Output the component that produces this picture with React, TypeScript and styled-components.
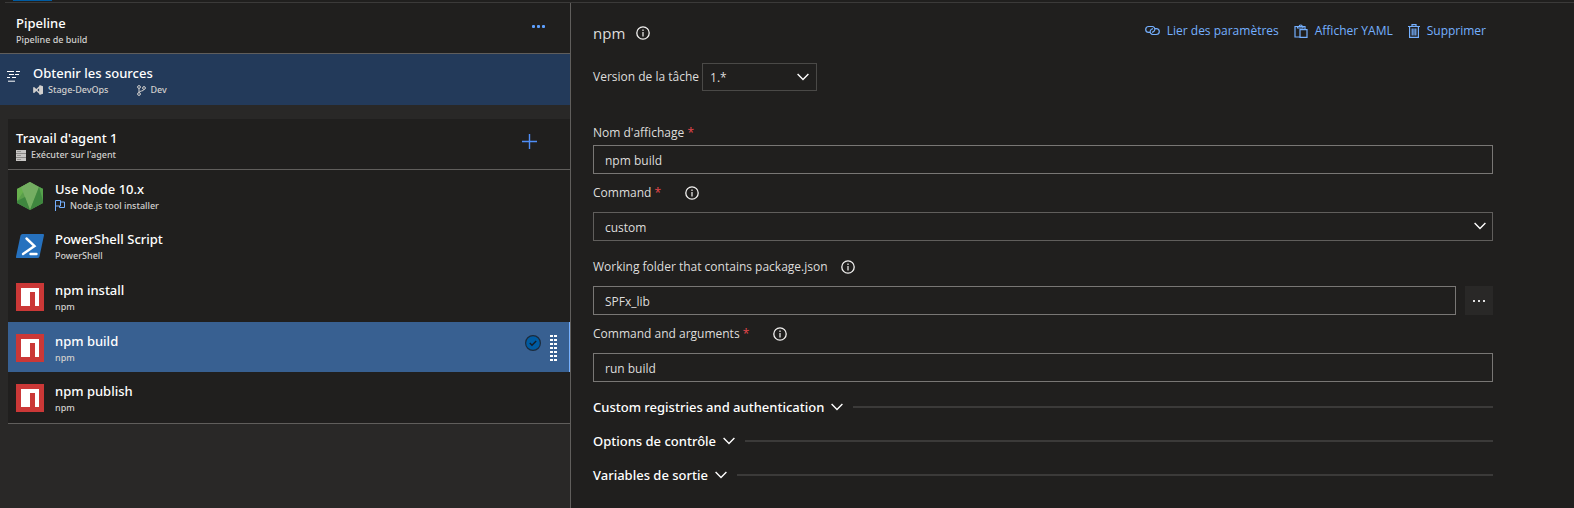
import React from 'react';
import styled, { createGlobalStyle, css } from 'styled-components';

const GlobalStyle = createGlobalStyle`
  *, *::before, *::after { box-sizing: border-box; }
  body {
    margin: 0;
    background: #201f1e;
    color: #dedddc;
    font-family: "Segoe UI", "Open Sans", "Noto Sans", sans-serif;
    font-size: 12px;
    line-height: 20px;
  }
  button, input, select { font: inherit; color: inherit; }
  button { background: none; border: 0; padding: 0; text-align: left; cursor: pointer; }
  svg { display: block; flex: none; }
`;

const Page = styled.div`
  display: flex;
  flex-direction: column;
  min-height: 100vh;
`;

const TabStrip = styled.div`
  height: 3px;
  margin-left: 5px;
  padding-left: 8px;
  border-bottom: 1px solid #3b3a39;
`;

const ActiveTab = styled.div`
  width: 39px;
  height: 1px;
  background: #005ba1;
`;

const Columns = styled.div`
  flex: 1;
  display: grid;
  grid-template-columns: minmax(0, 571fr) minmax(0, 1003fr);
`;

const Sidebar = styled.aside`
  background: #292827;
  border-right: 1px solid #605e5c;
`;

const Title = styled.span`
  display: block;
  font-family: "Segoe UI", "Noto Sans", sans-serif;
  font-size: 13px;
  font-weight: 500;
  line-height: 18px;
  color: #fff;
`;

const Subtitle = styled.span`
  display: flex;
  align-items: center;
  gap: 5px;
  font-family: "Segoe UI", "Noto Sans", sans-serif;
  font-size: 9px;
  font-weight: 500;
  line-height: 16px;
  color: #d2d0ce;
`;

const PipelineHeader = styled.header`
  display: flex;
  justify-content: space-between;
  height: 51px;
  padding: 11px 25px 0 16px;
  background: #201f1e;
  border-bottom: 1px solid #605e5c;
`;

const IconButton = styled.button`
  display: flex;
  align-items: center;
  justify-content: center;
  width: 14px;
  height: 24px;
  color: #5ea0ff;
`;

const SourcesRow = styled.button`
  display: flex;
  gap: 13px;
  width: 100%;
  height: 51px;
  padding: 10px 0 0 7px;
  background: #233a5a;
`;

const SourcesIcon = styled.span`
  padding-top: 7px;
`;

const SourceDetails = styled.span`
  display: flex;
  gap: 28px;
`;

const JobCard = styled.section`
  margin: 14px 0 0 8px;
  background: #201f1e;
  border-bottom: 1px solid #605e5c;
`;

const JobHeader = styled.div`
  display: flex;
  justify-content: space-between;
  height: 51px;
  padding: 10px 34px 0 8px;
  border-bottom: 1px solid #605e5c;
`;

const TaskList = styled.ul`
  display: grid;
  grid-auto-rows: 1fr;
  min-height: 253px;
  margin: 0;
  padding: 0;
  list-style: none;
`;

const TaskRow = styled.button<{ $selected?: boolean }>`
  display: flex;
  align-items: center;
  width: 100%;
  height: 100%;
  padding: 1px 12px 0 8px;
  border-right: 1px solid transparent;
  ${({ $selected }) =>
    $selected &&
    css`
      background: #386091;
      border-right-color: #75b0ff;
    `}
`;

const TaskText = styled.span`
  flex: 1;
  margin-left: 11px;
  padding-top: 2px;
`;

const TaskMarks = styled.span`
  display: flex;
  align-items: flex-start;
  gap: 9px;
`;

const Details = styled.main`
  padding: 0 81px 14px 22px;
`;

const DetailsHeader = styled.header`
  display: flex;
  align-items: center;
  justify-content: space-between;
  height: 60px;
`;

const TaskName = styled.h1`
  display: flex;
  align-items: center;
  gap: 11px;
  margin: 0;
  font-size: 15px;
  font-weight: 400;
`;

const Toolbar = styled.div`
  display: flex;
  gap: 15px;
  padding: 0 7px 5px 0;
`;

const ToolButton = styled.button`
  display: flex;
  align-items: center;
  gap: 7px;
  color: #75b0ff;
`;

const VersionRow = styled.div`
  display: flex;
  align-items: center;
  gap: 3px;
  margin-bottom: 32px;
`;

const SelectBox = styled.div<{ $small?: boolean }>`
  position: relative;
  width: ${({ $small }) => ($small ? '115px' : '100%')};
`;

const Select = styled.select<{ $small?: boolean }>`
  display: block;
  appearance: none;
  width: 100%;
  height: ${({ $small }) => ($small ? '28px' : '29px')};
  padding: 2px 32px 0 ${({ $small }) => ($small ? '7px' : '11px')};
  background: transparent;
  border: 1px solid ${({ $small }) => ($small ? '#4a4947' : '#605e5c')};
  border-radius: 0;
`;

const SelectArrow = styled.span<{ $small?: boolean }>`
  position: absolute;
  top: 10px;
  right: ${({ $small }) => ($small ? '8px' : '7px')};
  pointer-events: none;
`;

const Field = styled.div<{ $gap: number }>`
  margin-bottom: ${({ $gap }) => $gap}px;
`;

const LabelRow = styled.div<{ $tight?: boolean; $space?: number }>`
  display: flex;
  align-items: center;
  gap: ${({ $space }) => $space ?? 24}px;
  margin-bottom: ${({ $tight }) => ($tight ? '2px' : '9px')};
`;

const Required = styled.span`
  color: #e8484d;
`;

const TextInput = styled.input`
  display: block;
  width: 100%;
  min-width: 0;
  height: 29px;
  padding: 1px 11px 0;
  background: transparent;
  border: 1px solid #797775;
  border-radius: 0;
`;

const InputWithButton = styled.div`
  display: flex;
  gap: 9px;
`;

const BrowseButton = styled.button`
  display: flex;
  align-items: center;
  justify-content: center;
  flex: none;
  width: 28px;
  height: 29px;
  background: #292827;
  color: #fff;
`;

const Sections = styled.div`
  padding-top: 8px;
`;

const SectionToggle = styled.button`
  display: flex;
  align-items: center;
  width: 100%;
  height: 34px;
  gap: 7px;
  color: #fff;
`;

const Rule = styled.span`
  flex: 1;
  height: 2px;
  margin-left: 3px;
  background: #3b3a39;
`;

const Chevron = () => (
  <svg width="12" height="8" viewBox="0 0 12 8" fill="none" stroke="#fff" strokeWidth="1.4" aria-hidden="true">
    <path d="M.6 1 6 6.4 11.4 1" />
  </svg>
);

const Info = () => (
  <svg width="14" height="14" viewBox="0 0 14 14" fill="none" stroke="#f3f2f1" aria-hidden="true">
    <circle cx="7" cy="7" r="6.2" strokeWidth="1.3" />
    <path d="M7 6v4.4M7 3.6v1.3" strokeWidth="1.2" />
  </svg>
);

const Dots = ({ size = 3, pitch = 5 }: { size?: number; pitch?: number }) => (
  <svg width={pitch * 2 + size} height={size} fill="currentColor" aria-hidden="true">
    {[0, 1, 2].map((i) => (
      <rect key={i} x={i * pitch} width={size} height={size} rx={size / 3} />
    ))}
  </svg>
);

const Plus = () => (
  <svg width="15" height="15" viewBox="0 0 15 15" stroke="#4f8ef7" strokeWidth="1.4" aria-hidden="true">
    <path d="M7.5 0v15M0 7.5h15" />
  </svg>
);

const SourceLines = () => (
  <svg width="13" height="11" viewBox="0 0 13 11" stroke="#fff" strokeWidth="1" aria-hidden="true">
    <path d="M0 .5h7M9 .5h4M2 3.5h5M8 3.5h4M0 6.5h3M5 6.5h4M1 10.2h7" />
  </svg>
);

const VisualStudio = () => (
  <svg width="10" height="10" viewBox="0 0 10 10" aria-hidden="true">
    <path fill="none" stroke="#d2d0ce" strokeWidth="1.5" strokeLinejoin="round" d="M7 1.500.900 7.300V2.700L7 8.500z" />
    <path fill="#d2d0ce" d="M6.500 0 10 1.300v7.400L6.500 10z" />
  </svg>
);

const Branch = () => (
  <svg width="9" height="11" viewBox="0 0 9 11" fill="none" stroke="#d2d0ce" strokeWidth="1" aria-hidden="true">
    <circle cx="2" cy="2" r="1.400" />
    <circle cx="7" cy="3" r="1.400" />
    <circle cx="2" cy="9" r="1.400" />
    <path d="M2 3.400v4.200M7 4.400C7 6.500 2 5.500 2 7.600" />
  </svg>
);

const Server = () => (
  <svg width="10" height="11" viewBox="0 0 10 11" aria-hidden="true">
    <path fill="#8a8886" d="M0 0h10v11H0z" />
    <path fill="#c8c6c4" d="M0 0h10v3H0zM0 4h10v3H0zM0 8h10v3H0z" />
    <path stroke="#979593" d="M1 1.500h4M1 5.500h4M1 9.500h4" />
  </svg>
);

const Flag = () => (
  <svg width="10" height="11" viewBox="0 0 10 11" fill="none" stroke="#75b0ff" strokeWidth="1" aria-hidden="true">
    <path d="M.5 11V.5h5v5.500h-5M5.500 2h4v5.500h-5V6" />
  </svg>
);

const NodeLogo = () => (
  <svg width="28" height="30" viewBox="0 0 28 30" aria-hidden="true">
    <path fill="#5a9e4b" d="M14 1 27 8v14l-13 7L1 22V8z" />
    <path fill="#68b04e" d="M14 1 5 6 1 8v12z" />
    <path fill="#74ae62" d="m5 6 9-5 9 5-9 23z" />
    <path fill="#3f873f" d="M1 20v2l13 7-5-13zM27 8v14l-13 7 9-23z" />
    <path fill="#56a24c" d="m23 6 4 2v12z" />
  </svg>
);

const PowerShellLogo = () => (
  <svg width="28" height="24" viewBox="0 0 28 24" aria-hidden="true">
    <path fill="#2671be" d="M6.500 0H27q1.300 0 1 1.300L23.500 22.500Q23 24 21.500 24H1q-1.300 0-1-1.300L4.500 1.500Q5 0 6.500 0z" />
    <path fill="none" stroke="#fff" strokeWidth="2.400" strokeLinecap="round" d="m10.500 4.500 8 7.500L7 20M14.500 20h6" />
  </svg>
);

const NpmLogo = () => (
  <svg width="28" height="28" viewBox="0 0 28 28" aria-hidden="true">
    <path fill="#cb3837" d="M0 0h28v28H0z" />
    <path fill="#fff" d="M5 5h18v18h-4V9h-5v14H5z" />
  </svg>
);

const CheckBadge = () => (
  <svg width="16" height="16" viewBox="0 0 16 16" aria-hidden="true">
    <circle cx="8" cy="8" r="7.400" fill="#005ba1" stroke="#1d2b3b" strokeWidth="1.200" />
    <path d="m4.800 8 2.200 2.200 4.200-4.200" fill="none" stroke="#141e28" strokeWidth="1.500" />
  </svg>
);

const Grip = () => (
  <svg width="7" height="26" viewBox="0 0 7 26" fill="#fff" aria-hidden="true">
    {[0, 4, 8, 12, 16, 20, 24].map((y) => (
      <path key={y} d={`M0 ${y}h3v2h-3zM4 ${y}h3v2h-3z`} />
    ))}
  </svg>
);

const LinkIcon = () => (
  <svg width="15" height="11" viewBox="0 0 15 11" fill="none" stroke="currentColor" strokeWidth="1.200" aria-hidden="true">
    <path d="M5 7.300H3.800A3.100 2.900 0 0 1 3.800 1.500h3.400a2.800 2.800 0 0 1 2.600 3.400Q9.300 7 7 7.300" />
    <path d="M10 3.700h1.200a3.100 2.900 0 0 1 0 5.800H7.800A2.800 2.800 0 0 1 5.200 6.100Q5.700 4 8 3.700" />
  </svg>
);

const Clipboard = () => (
  <svg width="14" height="14" viewBox="0 0 14 14" fill="none" stroke="currentColor" strokeWidth="1.200" aria-hidden="true">
    <path d="M5.500 13H1V2.500h10V5M3.500 4V2.500h1.700a1.500 1.500 0 0 1 3 0H9V4zM6 5.600h7v7.800H6z" />
  </svg>
);

const Trash = () => (
  <svg width="12" height="14" viewBox="0 0 12 14" fill="none" stroke="currentColor" strokeWidth="1.200" aria-hidden="true">
    <path d="M0 2.500h12M4 2.300V.600h4v1.700M1.600 2.500v10.900h8.800V2.500M4.200 4.500v7M6 4.500v7M7.800 4.500v7" />
  </svg>
);

type Task = { title: string; type: string; logo: React.ReactNode; flag?: boolean; selected?: boolean };

const tasks: Task[] = [
  { title: 'Use Node 10.x', type: 'Node.js tool installer', logo: <NodeLogo />, flag: true },
  { title: 'PowerShell Script', type: 'PowerShell', logo: <PowerShellLogo /> },
  { title: 'npm install', type: 'npm', logo: <NpmLogo /> },
  { title: 'npm build', type: 'npm', logo: <NpmLogo />, selected: true },
  { title: 'npm publish', type: 'npm', logo: <NpmLogo /> },
];

const sections = ['Custom registries and authentication', 'Options de contrôle', 'Variables de sortie'];

export default function App() {
  return (
    <Page>
      <GlobalStyle />
      <TabStrip>
        <ActiveTab />
      </TabStrip>
      <Columns>
        <Sidebar>
          <PipelineHeader>
            <div>
              <Title>Pipeline</Title>
              <Subtitle>Pipeline de build</Subtitle>
            </div>
            <IconButton aria-label="Plus d'actions">
              <Dots />
            </IconButton>
          </PipelineHeader>
          <SourcesRow>
            <SourcesIcon>
              <SourceLines />
            </SourcesIcon>
            <span>
              <Title>Obtenir les sources</Title>
              <SourceDetails>
                <Subtitle>
                  <VisualStudio />
                  Stage-DevOps
                </Subtitle>
                <Subtitle>
                  <Branch />
                  Dev
                </Subtitle>
              </SourceDetails>
            </span>
          </SourcesRow>
          <JobCard>
            <JobHeader>
              <div>
                <Title>Travail d'agent 1</Title>
                <Subtitle>
                  <Server />
                  Exécuter sur l'agent
                </Subtitle>
              </div>
              <IconButton aria-label="Ajouter une tâche">
                <Plus />
              </IconButton>
            </JobHeader>
            <TaskList>
              {tasks.map((task) => (
                <li key={task.title}>
                  <TaskRow $selected={task.selected}>
                    {task.logo}
                    <TaskText>
                      <Title>{task.title}</Title>
                      <Subtitle>
                        {task.flag && <Flag />}
                        {task.type}
                      </Subtitle>
                    </TaskText>
                    {task.selected && (
                      <TaskMarks>
                        <CheckBadge />
                        <Grip />
                      </TaskMarks>
                    )}
                  </TaskRow>
                </li>
              ))}
            </TaskList>
          </JobCard>
        </Sidebar>
        <Details>
          <DetailsHeader>
            <TaskName>
              npm
              <Info />
            </TaskName>
            <Toolbar>
              <ToolButton>
                <LinkIcon />
                Lier des paramètres
              </ToolButton>
              <ToolButton>
                <Clipboard />
                Afficher YAML
              </ToolButton>
              <ToolButton>
                <Trash />
                Supprimer
              </ToolButton>
            </Toolbar>
          </DetailsHeader>
          <VersionRow>
            <label htmlFor="version">Version de la tâche</label>
            <SelectBox $small>
              <Select id="version" $small>
                <option>1.*</option>
              </Select>
              <SelectArrow $small>
                <Chevron />
              </SelectArrow>
            </SelectBox>
          </VersionRow>
          <Field $gap={9}>
            <LabelRow $tight>
              <label htmlFor="display-name">
                Nom d'affichage <Required>*</Required>
              </label>
            </LabelRow>
            <TextInput id="display-name" defaultValue="npm build" />
          </Field>
          <Field $gap={16}>
            <LabelRow>
              <label htmlFor="command">
                Command <Required>*</Required>
              </label>
              <Info />
            </LabelRow>
            <SelectBox>
              <Select id="command">
                <option>custom</option>
              </Select>
              <SelectArrow>
                <Chevron />
              </SelectArrow>
            </SelectBox>
          </Field>
          <Field $gap={9}>
            <LabelRow $space={13}>
              <label htmlFor="folder">Working folder that contains package.json</label>
              <Info />
            </LabelRow>
            <InputWithButton>
              <TextInput id="folder" defaultValue="SPFx_lib" />
              <BrowseButton aria-label="Parcourir">
                <Dots size={2} />
              </BrowseButton>
            </InputWithButton>
          </Field>
          <Field $gap={0}>
            <LabelRow>
              <label htmlFor="arguments">
                Command and arguments <Required>*</Required>
              </label>
              <Info />
            </LabelRow>
            <TextInput id="arguments" defaultValue="run build" />
          </Field>
          <Sections>
            {sections.map((name) => (
              <SectionToggle key={name} aria-expanded="false">
                <Title>{name}</Title>
                <Chevron />
                <Rule />
              </SectionToggle>
            ))}
          </Sections>
        </Details>
      </Columns>
    </Page>
  );
}
